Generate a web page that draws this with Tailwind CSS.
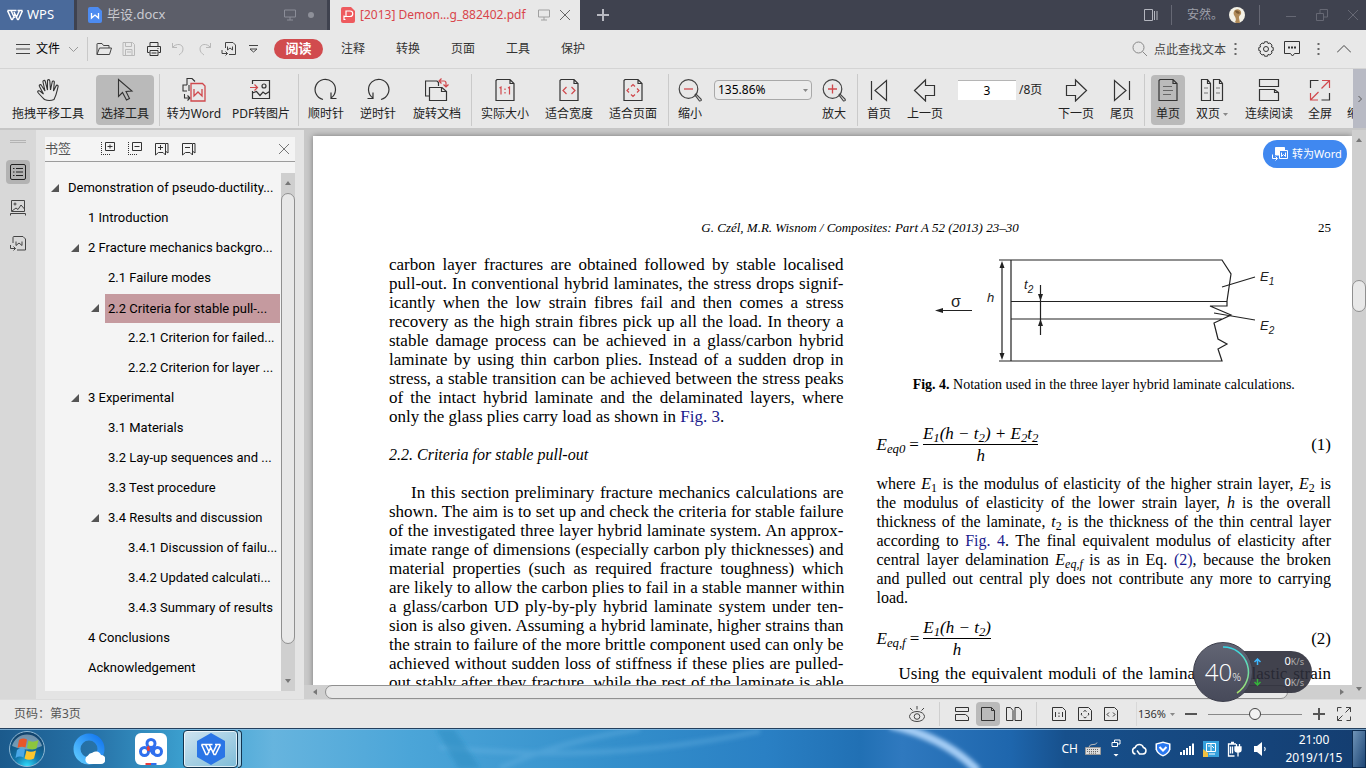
<!DOCTYPE html>
<html lang="zh-CN">
<head>
    <meta charset="UTF-8" />
    <meta name="viewport" content="width=device-width, initial-scale=1" />
    <title>[2013] Demon...g_882402.pdf - WPS</title>
    <script src="https://cdn.jsdelivr.net/npm/@tailwindcss/browser@4"></script>
</head>
<body class="flex h-screen flex-col overflow-hidden bg-[#e8e8e8] font-['Noto_Sans','Noto_Sans_CJK_SC',sans-serif] text-xs text-[#222]">

    <!-- Title bar -->
    <header class="flex h-[30px] shrink-0 items-stretch bg-[#3f424f]">
        <button class="flex w-[74px] items-center gap-1 bg-[#4a6a9b] pl-[7px] text-[13px] text-white">
            <svg class="h-3 w-4" viewBox="0 0 16 12" fill="none" stroke="#fff" stroke-width="1.500" stroke-linejoin="round"><path d="M.5 1.500h9M.5 1.500L4.500 10.500h1L8 5M4 1.500L7.500 9M15.500 1.500h-5M15.500 1.500L11.500 10.500h-1L7 3M12.500 1.500L9 9" /></svg>
            WPS
        </button>
        <div class="ml-[3px] flex w-[250px] items-center bg-[#5c5e69] pr-[13px] pl-[11px]">
            <svg class="h-4 w-[14px]" viewBox="0 0 14 16"><path d="M2 0h8l4 4v10a2 2 0 0 1-2 2H2a2 2 0 0 1-2-2V2a2 2 0 0 1 2-2z" fill="#4d8bf0" /><path d="M3.500 6v5l3.500-3 3.500 3V6" fill="none" stroke="#fff" stroke-width="1.300" /></svg>
            <a href="#" class="ml-[5px] flex-1 text-[13px] text-[#c9cad0]">毕设.docx</a>
            <svg class="h-3 w-3" viewBox="0 0 12 12" fill="none" stroke="#8b8d98"><path d="M.5 1h11v7H.5zM6 8v3M3 11h6" /></svg>
            <span class="ml-3 h-1.5 w-1.5 rounded-full bg-[#8e9099]"></span>
        </div>
        <div class="ml-[3px] flex w-[250px] items-center bg-[#e8e8e8] pr-2.5 pl-[11px]">
            <svg class="h-4 w-[14px] shrink-0" viewBox="0 0 14 16"><path d="M2 0h8l4 4v10a2 2 0 0 1-2 2H2a2 2 0 0 1-2-2V2a2 2 0 0 1 2-2z" fill="#ee5a5e" /><path d="M5 9.500V4h4a2 2 0 0 1 0 5.500H3.500M3 8.500v4h1.500" fill="none" stroke="#fff" stroke-width="1.200" /></svg>
            <a href="#" class="ml-[5px] flex-1 whitespace-nowrap text-xs text-[#d9454b]">[2013] Demon...g_882402.pdf</a>
            <svg class="h-3 w-3 shrink-0" viewBox="0 0 12 12" fill="none" stroke="#a0a0a0"><path d="M.5 1h11v7H.5zM6 8v3M3 11h6" /></svg>
            <button class="ml-2.5" aria-label="关闭标签"><svg class="h-2.5 w-2.5" viewBox="0 0 10 10" stroke="#666"><path d="M0 0l10 10M10 0L0 10" /></svg></button>
        </div>
        <button class="ml-[17px]" aria-label="新建标签"><svg class="h-3 w-3" viewBox="0 0 12 12" stroke="#b9bac2" stroke-width="2"><path d="M0 6h12M6 0v12" /></svg></button>
        <div class="ml-auto flex items-center pr-2">
            <svg class="h-3.5 w-3.5" viewBox="0 0 14 14" fill="none" stroke="#b4b6bf"><path d="M.5 1.500h8v11h-8zM10.500 3v9M13 3v9" /></svg>
            <span class="mx-[13px] h-5 w-px bg-[#666874]"></span>
            <a href="#" class="ml-[2px] text-[#9d9fa9]">安然。</a>
            <svg class="ml-1.5 h-4 w-4" viewBox="0 0 16 16"><circle cx="8" cy="8" r="8" fill="#f4f1e6" /><path d="M6 3c3-2 7 0 6 4-1 2-2 1-2 4l1 5c-3 1-4 0-5-1 2-3 0-5-1-7s0-4 1-5z" fill="#b08a58" /><path d="M6 4c2-1 4 0 5 2-2 2-4 0-5-2z" fill="#7a5a33" /></svg>
            <span class="mx-[14px] h-5 w-px bg-[#666874]"></span>
            <button class="ml-3" aria-label="最小化"><svg class="h-2.5 w-2.5" viewBox="0 0 10 10" stroke="#666874"><path d="M0 6.500h10" /></svg></button>
            <button class="ml-5" aria-label="还原"><svg class="h-3 w-3" viewBox="0 0 12 12" fill="none" stroke="#666874"><path d="M.5 4.500h7v7h-7zM4 4.500v-4h7.500V8H8" /></svg></button>
            <button class="ml-5" aria-label="关闭"><svg class="h-2.5 w-2.5" viewBox="0 0 10 10" stroke="#666874"><path d="M0 0l10 10M10 0L0 10" /></svg></button>
        </div>
    </header>

    <!-- Menu row -->
    <nav class="flex h-[38px] shrink-0 items-center pr-[15px] pl-4 text-[#333]">
        <button class="flex items-center gap-1.5 text-black">
            <svg class="h-2.5 w-3.5" viewBox="0 0 14 10" stroke="#444"><path d="M0 .5h14M0 5h14M0 9.500h14" /></svg>
            文件
            <svg class="ml-[3px] h-[5px] w-[9px]" viewBox="0 0 9 5" fill="none" stroke="#999"><path d="M0 0l4.500 4.500L9 0" /></svg>
        </button>
        <span class="mr-2 ml-[9px] h-6 w-px bg-[#c9c9c9]"></span>
        <button aria-label="打开"><svg class="h-4 w-4" viewBox="0 0 16 16" fill="none" stroke="#444"><path d="M1 13.500V3q0-.5.5-.5H6l1.500 2h5.500v2.500M1 13.500L3.500 7H15.500L13.500 13.500z" /></svg></button>
        <button class="ml-[9px]" aria-label="保存"><svg class="h-4 w-4" viewBox="0 0 16 16" fill="none" stroke="#b8b8b8"><path d="M2 1.500h9.500l2 2v11H2zM4.500 1.500v4h6v-4M4.500 14.500v-6h6.500v6M6 11h4" /></svg></button>
        <button class="ml-[9px]" aria-label="打印"><svg class="h-4 w-4" viewBox="0 0 16 16" fill="none" stroke="#333"><path d="M4 5V1.500h8V5M3.500 11.500h-2v-6h13v6h-2M4 9.500h8v5H4zM5.500 12h5M11.500 7.500h1" /></svg></button>
        <button class="ml-[9px]" aria-label="撤销"><svg class="h-4 w-4" viewBox="0 0 16 16" fill="none" stroke="#b8b8b8"><path d="M1.500 2v4.500H6M1.500 6.500C5 2 12 2.500 12 8c0 3-2 4.500-4 6" /></svg></button>
        <button class="ml-[9px]" aria-label="重做"><svg class="h-4 w-4" viewBox="0 0 16 16" fill="none" stroke="#b8b8b8"><path d="M14.500 2v4.500H10M14.500 6.500C11 2 4 2.500 4 8c0 3 2 4.500 4 6" /></svg></button>
        <button class="ml-[9px]" aria-label="转为Word"><svg class="h-4 w-4" viewBox="0 0 16 16" fill="none" stroke="#444"><path d="M4.500 7V1.500h7.500l2.500 2.500v9.500H8M6.500 5.500V9l2.500-2 2.500 2V5.500M1 9v3.500h5.500M4.500 10.500l2 2-2 2" /></svg></button>
        <button class="ml-3" aria-label="自定义快速访问"><svg class="h-2 w-[9px]" viewBox="0 0 9 8" fill="none" stroke="#444"><path d="M0 .5h9M1 4h7L4.500 7z" /></svg></button>
        <button class="ml-4 h-5 w-[49px] rounded-full bg-[#d14b4e] text-[13px] font-bold text-white">阅读</button>
        <button class="ml-[18px]">注释</button>
        <button class="ml-[31px]">转换</button>
        <button class="ml-[31px]">页面</button>
        <button class="ml-[31px]">工具</button>
        <button class="ml-[31px]">保护</button>
        <div class="ml-auto flex items-center">
            <label for="find" class="mr-1.5"><svg class="h-4 w-4" viewBox="0 0 16 16" fill="none" stroke="#888"><title>查找</title><circle cx="6.500" cy="6.500" r="5.500" /><path d="M10.500 10.500l4.500 4.500" /></svg></label>
            <input id="find" type="text" placeholder="点此查找文本" class="w-[75px] bg-transparent pt-0.5 text-xs placeholder:text-[#444] outline-none" />
            <button class="ml-[5px]" aria-label="查找选项"><svg class="h-3.5 w-[3px]" viewBox="0 0 3 14" fill="#666"><path d="M.5 1h2v2h-2zM.5 6h2v2h-2zM.5 11h2v2h-2z" /></svg></button>
            <button class="ml-[21px]" aria-label="设置"><svg class="h-4 w-4" viewBox="0 0 16 16" fill="none" stroke="#333"><path d="M6.500 .8h3l.6 1.800 1.800-.6 2.100 2.100-.6 1.800 1.800.6v3l-1.800.6.6 1.800-2.100 2.100-1.800-.6-.6 1.800h-3l-.6-1.800-1.800.6L2 11.900l.6-1.800-1.800-.6v-3l1.800-.6L2 4.100 4.100 2l1.800.6z" /><circle cx="8" cy="8" r="2.500" /></svg></button>
            <button class="ml-2.5" aria-label="反馈"><svg class="h-4 w-4" viewBox="0 0 16 16" fill="none" stroke="#333"><path d="M.5.500h15v12h-5l-2 2.500-2-2.500h-6z" /><path d="M4 6.500h2M7 6.500h2M10 6.500h2" stroke-width="2" /></svg></button>
            <button class="ml-[17px]" aria-label="更多"><svg class="h-3.5 w-[3px]" viewBox="0 0 3 14" fill="#666"><path d="M.5 1h2v2h-2zM.5 6h2v2h-2zM.5 11h2v2h-2z" /></svg></button>
            <button class="ml-[17px]" aria-label="折叠功能区"><svg class="h-2 w-3.5" viewBox="0 0 14 8" fill="none" stroke="#444"><path d="M0 7.500L7 .5l7 7" /></svg></button>
        </div>
    </nav>

    <!-- Ribbon -->
    <div class="flex h-[62px] shrink-0 items-center border-t border-b-2 border-t-[#d4d4d4] border-b-[#c6c6c6]">
        <div class="mt-[3px] flex h-[52px] min-w-0 flex-1 items-center overflow-hidden whitespace-nowrap">
            <button class="flex h-[50px] w-24 shrink-0 flex-col items-center gap-1 pt-[3px]">
                <svg class="h-6 w-6 shrink-0" viewBox="0 0 24 24" fill="none" stroke="#333" stroke-width="1.100"><path d="M8.500 21.500C6 19 3.500 16.500 2 14.500c-1-1.500 1-2.500 2.500-1l3 2.500L3.500 8.500c-.8-1.800 1.200-2.600 2-1L9 13 7 4c-.3-1.800 1.800-2.200 2.300-.5L11.500 12V3c0-1.800 2.200-1.800 2.300 0L14.500 12l1.700-8c.4-1.600 2.400-1.200 2.100.5L17.500 13l2.500-5c.8-1.500 2.500-.7 2 .9C21 13 20.500 17 18 21.500q-4.500 2-9.500 0z" /></svg>
                <span>拖拽平移工具</span>
            </button>
            <button class="flex h-[50px] w-[58px] shrink-0 flex-col items-center gap-1 rounded bg-[#bababa] pt-[3px]">
                <svg class="h-6 w-6 shrink-0" viewBox="0 0 24 24" fill="none" stroke="#333" stroke-width="1.100"><path d="M5.500 1.500v17l4-4 4 7.500 3-1.500-3.500-7 6-.5z" /></svg>
                <span>选择工具</span>
            </button>
            <span class="ml-[5px] h-[52px] w-px shrink-0 bg-[#cacaca]"></span>
            <button class="flex h-[50px] w-[68px] shrink-0 flex-col items-center gap-1 pt-[3px]">
                <svg class="h-6 w-6 shrink-0" viewBox="0 0 24 24" fill="none" stroke="#333" stroke-width="1.100"><path d="M5 7V.5h5l3 3M5 7H1v6h4M7 7v6M2.500 16v4H8M5.500 17.500L8 20l-2.500 2.500" /><path d="M9 5.500h11.500L23 8v15H9zM12 11v7l4-4 4 4v-7" stroke="#d0484c" stroke-width="1.300" /></svg>
                <span>转为Word</span>
            </button>
            <button class="mr-1 flex h-[50px] w-[66px] shrink-0 flex-col items-center gap-1 pt-[3px]">
                <svg class="h-6 w-6 shrink-0" viewBox="0 0 24 24" fill="none" stroke="#333" stroke-width="1.200"><path d="M3.500 6V2.500h17v18h-17V13M3.500 15l4-1.500 3.500 4 3-3.500 2.500 2 4-2.500" /><circle cx="15" cy="8" r="2" /><path d="M1 9.500h7M5.500 6.500l3 3-3 3" stroke="#d0484c" /></svg>
                <span>PDF转图片</span>
            </button>
            <span class="h-[52px] w-px shrink-0 bg-[#cacaca]"></span>
            <button class="flex h-[50px] w-[54px] shrink-0 flex-col items-center gap-1 pt-[3px]">
                <svg class="h-6 w-6 shrink-0" viewBox="0 0 24 24" fill="none" stroke="#333" stroke-width="1.200"><path d="M9 21.500A10.200 10.200 0 1 1 17 20M17 14.500v6h5.500" /></svg>
                <span>顺时针</span>
            </button>
            <button class="flex h-[50px] w-[50px] shrink-0 flex-col items-center gap-1 pt-[3px]">
                <svg class="h-6 w-6 shrink-0" viewBox="0 0 24 24" fill="none" stroke="#333" stroke-width="1.200"><path d="M15 21.500A10.200 10.200 0 1 0 7 20M7 14.500v6H1.500" /></svg>
                <span>逆时针</span>
            </button>
            <button class="flex h-[50px] w-[68px] shrink-0 flex-col items-center gap-1 pt-[3px]">
                <svg class="h-6 w-6 shrink-0" viewBox="0 0 24 24" fill="none" stroke="#333" stroke-width="1.200"><path d="M4.500 18H.5V3H12l1.500 1.500V8M4.500 9.500H17l4.500 4v9h-17zM16.500 9.500v4h5" /><path d="M14 3h5q2 0 2 2v4M16.500.5L14 3l2.500 2.500M18.500 6.500L21 9l2.500-2.500" stroke="#d0484c" /></svg>
                <span>旋转文档</span>
            </button>
            <span class="h-[52px] w-px shrink-0 bg-[#cacaca]"></span>
            <button class="ml-px flex h-[50px] w-16 shrink-0 flex-col items-center gap-1 pt-[3px]">
                <svg class="h-6 w-6 shrink-0" viewBox="0 0 24 24" fill="none" stroke="#333" stroke-width="1.200"><path d="M4 1.500h13l4 4V22.500H3V2.500zM17 1.500v4h4" /><path d="M6.500 10L8 9v7.500M15 10l1.500-1v7.500M12 10.500v1.500M12 14v1.500" stroke="#d0484c" /></svg>
                <span>实际大小</span>
            </button>
            <button class="flex h-[50px] w-16 shrink-0 flex-col items-center gap-1 pt-[3px]">
                <svg class="h-6 w-6 shrink-0" viewBox="0 0 24 24" fill="none" stroke="#333" stroke-width="1.200"><path d="M4 1.500h13l4 4V22.500H3V2.500zM17 1.500v4h4" /><path d="M9.500 9L6 12.500 9.500 16M14.500 9l3.500 3.500L14.500 16" stroke="#d0484c" /></svg>
                <span>适合宽度</span>
            </button>
            <button class="flex h-[50px] w-16 shrink-0 flex-col items-center gap-1 pt-[3px]">
                <svg class="h-6 w-6 shrink-0" viewBox="0 0 24 24" fill="none" stroke="#333" stroke-width="1.200"><path d="M4 1.500h13l4 4V22.500H3V2.500zM17 1.500v4h4" /><path d="M8 10.500L6 12.500l2 2M16 10.500l2 2-2 2M10 8.500l2-2 2 2M10 16.500l2 2 2-2" stroke="#d0484c" /></svg>
                <span>适合页面</span>
            </button>
            <span class="ml-[3px] h-[52px] w-px shrink-0 bg-[#cacaca]"></span>
            <button class="flex h-[50px] w-[42px] shrink-0 flex-col items-center gap-1 pt-[3px]">
                <svg class="h-6 w-6 shrink-0" viewBox="0 0 24 24" fill="none" stroke="#444" stroke-width="1.200"><circle cx="10.500" cy="11" r="9.300" /><path d="M17 17l1-1 5 5q1 2-1.500 2z" /><path d="M6 11h9" stroke="#d0484c" stroke-width="1.300" /></svg>
                <span>缩小</span>
            </button>
            <div class="relative mb-1 ml-[3px] shrink-0 self-start pt-[6px]">
                <select aria-label="缩放比例" class="h-5 w-[98px] appearance-none rounded-sm border border-[#a9a9a9] bg-[#ececec] pl-[3px] text-xs text-black">
                    <option>135.86%</option>
                </select>
                <svg class="pointer-events-none absolute top-[15px] right-1 h-[3px] w-[5px]" viewBox="0 0 5 3"><path d="M0 0h5L2.500 3z" fill="#888" /></svg>
            </div>
            <button class="flex h-[50px] w-[44px] shrink-0 flex-col items-center gap-1 pt-[3px]">
                <svg class="h-6 w-6 shrink-0" viewBox="0 0 24 24" fill="none" stroke="#444" stroke-width="1.200"><circle cx="10.500" cy="11" r="9.300" /><path d="M17 17l1-1 5 5q1 2-1.500 2z" /><path d="M6 11h9M10.500 6.500v9" stroke="#d0484c" stroke-width="1.300" /></svg>
                <span>放大</span>
            </button>
            <span class="ml-px h-[52px] w-px shrink-0 bg-[#cacaca]"></span>
            <button class="flex h-[50px] w-[42px] shrink-0 flex-col items-center gap-1 pt-[3px]">
                <svg class="h-6 w-6 shrink-0" viewBox="0 0 24 24" fill="none" stroke="#333" stroke-width="1.200"><path d="M4.500 3v19M19.500 2.500v20L8 12.500z" /></svg>
                <span>首页</span>
            </button>
            <button class="flex h-[50px] w-[50px] shrink-0 flex-col items-center gap-1 pt-[3px]">
                <svg class="h-6 w-6 shrink-0" viewBox="0 0 24 24" fill="none" stroke="#333" stroke-width="1.200"><path d="M1.500 12.500l11-10.500v5.500h9v10h-9V23z" /></svg>
                <span>上一页</span>
            </button>
            <div class="flex w-[102px] shrink-0 items-center gap-[3px] self-start pt-[6px] pl-2">
                <input type="text" value="3" aria-label="页码" class="h-5 w-[58px] border-t border-[#b5b5b5] bg-white text-center text-xs text-black" />
                <span>/8页</span>
            </div>
            <button class="flex h-[50px] w-12 shrink-0 flex-col items-center gap-1 pt-[3px]">
                <svg class="h-6 w-6 shrink-0" viewBox="0 0 24 24" fill="none" stroke="#333" stroke-width="1.200"><path d="M22.500 12.500L11.500 2v5.500h-9v10h9V23z" /></svg>
                <span>下一页</span>
            </button>
            <button class="flex h-[50px] w-[44px] shrink-0 flex-col items-center gap-1 pt-[3px]">
                <svg class="h-6 w-6 shrink-0" viewBox="0 0 24 24" fill="none" stroke="#333" stroke-width="1.200"><path d="M19.500 3v19M4.500 2.500v20L16 12.500z" /></svg>
                <span>尾页</span>
            </button>
            <span class="h-[52px] w-px shrink-0 bg-[#cacaca]"></span>
            <button class="ml-1.5 flex h-[50px] w-[34px] shrink-0 flex-col items-center gap-1 rounded bg-[#bababa] pt-[3px]">
                <svg class="h-6 w-6 shrink-0" viewBox="0 0 24 24" fill="none" stroke="#333" stroke-width="1.200"><path d="M4 1.500h13l4 4V22.500H3V2.500zM17 1.500v4h4" /><path d="M7 8.500h9M7 12.500h10M7 16.500h8" stroke="#666" /></svg>
                <span>单页</span>
            </button>
            <button class="flex h-[50px] w-[54px] shrink-0 flex-col items-center gap-1 pt-[3px]">
                <svg class="h-6 w-6 shrink-0" viewBox="0 0 24 24" fill="none" stroke="#333" stroke-width="1.200"><path d="M1.500 1.500h6l3 4v17h-9zM7.500 1.500v4h3M13.500 1.500h6l3 4v17h-9zM19.500 1.500v4h3" /><path d="M4 10h4M4 15h4M16 10h4M16 15h4" stroke="#777" /></svg>
                <span class="flex items-center gap-[3px]">双页<svg class="h-[3px] w-[5px]" viewBox="0 0 5 3"><path d="M0 0h5L2.500 3z" fill="#888" /></svg></span>
            </button>
            <button class="flex h-[50px] w-[60px] shrink-0 flex-col items-center gap-1 pt-[3px]">
                <svg class="h-6 w-6 shrink-0" viewBox="0 0 24 24" fill="none" stroke="#333" stroke-width="1.200"><path d="M2.500 1.500h19v7h-19zM2.500 22.500v-11h15l4 3v8zM17.500 11.500v3h4" /></svg>
                <span>连续阅读</span>
            </button>
            <button class="flex h-[50px] w-[42px] shrink-0 flex-col items-center gap-1 pt-[3px]">
                <svg class="h-6 w-6 shrink-0" viewBox="0 0 24 24" fill="none" stroke="#333" stroke-width="1.200"><path d="M2.500 10V2.500h8M21.500 15v7h-8" /><path d="M14 2.500h7.500V10M13.500 10.500l8-8M2.500 15v7h7.500M2.500 22l8-8" stroke="#d0484c" /></svg>
                <span>全屏</span>
            </button>
            <button class="flex h-[50px] w-12 shrink-0 flex-col items-center gap-1 pt-[3px]">
                <span class="h-6"></span>
                <span>缩略图</span>
            </button>
        </div>
        <button class="flex h-full w-[13px] shrink-0 items-center justify-center bg-[#b8bac4]" aria-label="向右滚动"><svg class="h-1.5 w-1" viewBox="0 0 4 6" fill="none" stroke="#555"><path d="M.5 0l3 3-3 3" /></svg></button>
    </div>

    <!-- Work area -->
    <main class="flex min-h-0 flex-1">
        <aside class="flex w-9 shrink-0 flex-col items-center bg-[#d8d8d8] pt-2.5">
            <span class="h-[3px] w-4 border-y border-[#b4b4b4]"></span>
            <button class="mt-[17px] flex h-6 w-6 items-center justify-center rounded bg-[#b3b3b3]" aria-label="书签"><svg class="h-4 w-4" viewBox="0 0 16 16" fill="none" stroke="#222"><rect x=".5" y=".5" width="15" height="15" rx="1.500" /><path d="M3 4.500h1.500M3 8h1.500M3 11.500h1.500M6 4.500h7M6 8h7M6 11.500h7" /></svg></button>
            <button class="mt-4" aria-label="缩略图"><svg class="h-4 w-4" viewBox="0 0 16 16" fill="none" stroke="#444"><path d="M1.500.5h13v11h-13zM.5 15.500v-2h15v2M2 11l4-3 2 1.500L11 5l3.500 4" /><circle cx="5" cy="4" r="1" /></svg></button>
            <button class="mt-5" aria-label="转为Word"><svg class="h-4 w-4" viewBox="0 0 16 16" fill="none" stroke="#444"><path d="M3 7V1.500Q3 .5 4 .5h9l2.500 2.500v11H7M6 5.500v4l3-2.500 3 2.500v-4M.5 9v3.500h5M3.500 10.500l2 2-2 2" /></svg></button>
        </aside>

        <section class="flex w-[268px] shrink-0 flex-col border-r-2 border-[#e4e4e4] bg-[#e4e4e4] pt-[7px] pr-[7px] pb-2 pl-[9px]">
            <div class="flex h-[25px] shrink-0 items-center border-b border-[#9c9c9c] bg-[#f4f4f4] pr-1.5">
                <h2 class="text-[13px] text-[#555]">书签</h2>
                <button class="ml-[30px]" aria-label="展开"><svg class="h-3.5 w-3.5" viewBox="0 0 14 14" fill="none" stroke="#333"><path d="M4.500.5h9v8h-9zM6.500 4.500h5M9 2.500v4" /><path d="M.5 0v14M0 12.500h10" stroke-dasharray="1 1" /></svg></button>
                <button class="ml-[13px]" aria-label="折叠"><svg class="h-3.5 w-3.5" viewBox="0 0 14 14" fill="none" stroke="#333"><path d="M4.500.5h9v8h-9zM6.500 4.500h5" /><path d="M.5 0v14M0 12.500h10" stroke-dasharray="1 1" /></svg></button>
                <button class="ml-[13px]" aria-label="添加书签"><svg class="h-3.5 w-3.5" viewBox="0 0 14 14" fill="none" stroke="#333"><path d="M.5 1.500h10v11.500L8 10.500H3.500L.5 13zM3 5.500h5M5.500 3v5M11 1.500l2 0V11l-2-1.500" /></svg></button>
                <button class="ml-[13px]" aria-label="删除书签"><svg class="h-3.5 w-3.5" viewBox="0 0 14 14" fill="none" stroke="#333"><path d="M.5 1.500h10v11.500L8 10.500H3.500L.5 13zM3 5.500h5M11 1.500l2 0V11l-2-1.500" /></svg></button>
                <button class="ml-auto" aria-label="关闭书签"><svg class="h-2.5 w-2.5" viewBox="0 0 10 10" stroke="#777"><path d="M0 0l10 10M10 0L0 10" /></svg></button>
            </div>
            <div class="flex min-h-0 flex-1 bg-[#f4f4f4] pt-[11px]">
                <ul class="min-w-0 flex-1 overflow-hidden font-['Roboto','Open_Sans',sans-serif] text-[13px] whitespace-nowrap text-black">
                    <li class="flex h-[30px] items-center gap-1.5 pl-1.5"><svg class="h-2 w-2 shrink-0" viewBox="0 0 8 8"><path d="M8 0v8H0z" fill="#555" /></svg><a href="#" class="min-w-0 flex-1 px-[3px]">Demonstration of pseudo-ductility...</a></li>
                    <li class="flex h-[30px] items-center pl-10"><a href="#" class="flex-1 px-[3px]">1 Introduction</a></li>
                    <li class="flex h-[30px] items-center gap-1.5 pl-[26px]"><svg class="h-2 w-2 shrink-0" viewBox="0 0 8 8"><path d="M8 0v8H0z" fill="#555" /></svg><a href="#" class="flex-1 px-[3px]">2 Fracture mechanics backgro...</a></li>
                    <li class="flex h-[30px] items-center pl-[60px]"><a href="#" class="flex-1 px-[3px]">2.1 Failure modes</a></li>
                    <li class="flex h-[30px] items-center gap-1.5 pr-px pl-[46px]"><svg class="h-2 w-2 shrink-0" viewBox="0 0 8 8"><path d="M8 0v8H0z" fill="#555" /></svg><a href="#" class="flex-1 bg-[#c59a9f] px-[3px] leading-[29px]">2.2 Criteria for stable pull-...</a></li>
                    <li class="flex h-[30px] items-center pl-20"><a href="#" class="flex-1 px-[3px]">2.2.1 Criterion for failed...</a></li>
                    <li class="flex h-[30px] items-center pl-20"><a href="#" class="flex-1 px-[3px]">2.2.2 Criterion for layer ...</a></li>
                    <li class="flex h-[30px] items-center gap-1.5 pl-[26px]"><svg class="h-2 w-2 shrink-0" viewBox="0 0 8 8"><path d="M8 0v8H0z" fill="#555" /></svg><a href="#" class="flex-1 px-[3px]">3 Experimental</a></li>
                    <li class="flex h-[30px] items-center pl-[60px]"><a href="#" class="flex-1 px-[3px]">3.1 Materials</a></li>
                    <li class="flex h-[30px] items-center pl-[60px]"><a href="#" class="flex-1 px-[3px]">3.2 Lay-up sequences and ...</a></li>
                    <li class="flex h-[30px] items-center pl-[60px]"><a href="#" class="flex-1 px-[3px]">3.3 Test procedure</a></li>
                    <li class="flex h-[30px] items-center gap-1.5 pl-[46px]"><svg class="h-2 w-2 shrink-0" viewBox="0 0 8 8"><path d="M8 0v8H0z" fill="#555" /></svg><a href="#" class="flex-1 px-[3px]">3.4 Results and discussion</a></li>
                    <li class="flex h-[30px] items-center pl-20"><a href="#" class="flex-1 px-[3px]">3.4.1 Discussion of failu...</a></li>
                    <li class="flex h-[30px] items-center pl-20"><a href="#" class="flex-1 px-[3px]">3.4.2 Updated calculati...</a></li>
                    <li class="flex h-[30px] items-center pl-20"><a href="#" class="flex-1 px-[3px]">3.4.3 Summary of results</a></li>
                    <li class="flex h-[30px] items-center pl-10"><a href="#" class="flex-1 px-[3px]">4 Conclusions</a></li>
                    <li class="flex h-[30px] items-center pl-10"><a href="#" class="flex-1 px-[3px]">Acknowledgement</a></li>
                </ul>
                <div class="flex w-3.5 shrink-0 flex-col items-center bg-[#cfcfcf]">
                    <svg class="my-2 h-1 w-1.5 shrink-0" viewBox="0 0 6 4"><path d="M0 4h6L3 0z" fill="#777" /></svg>
                    <span class="w-3.5 flex-1 rounded-full border border-[#909090] bg-[#e8e8e8]"></span>
                    <svg class="mt-[35px] mb-2 h-1 w-1.5 shrink-0" viewBox="0 0 6 4"><path d="M0 0h6L3 4z" fill="#777" /></svg>
                </div>
            </div>
        </section>

        <section class="relative flex min-w-0 flex-1 bg-[#c8c8c8]">
            <div class="flex min-w-0 flex-1 flex-col">
                <div class="min-h-0 flex-1 overflow-hidden pt-1.5 pl-[9px]">
                    <article class="min-h-full bg-white pt-[84px] pr-[21px] pl-[76px] font-['Liberation_Serif',serif] text-[17px] leading-[19px] whitespace-nowrap text-black shadow-[0_0_6px_rgba(0,0,0,0.4)]">
                        <div class="grid h-4 grid-cols-[1fr_auto_1fr] items-center text-[13px] leading-4">
                            <span></span>
                            <span class="italic">G. Czél, M.R. Wisnom / Composites: Part A 52 (2013) 23–30</span>
                            <span class="text-right">25</span>
                        </div>
                        <div class="mt-[19px] grid grid-cols-2 gap-[33px]">
                            <div>
                                <p class="[text-align-last:justify]">carbon layer fractures are obtained followed by stable localised<br>pull-out. In conventional hybrid laminates, the stress drops signif-<br>icantly when the low strain fibres fail and then comes a stress<br>recovery as the high strain fibres pick up all the load. In theory a<br>stable damage process can be achieved in a glass/carbon hybrid<br>laminate by using thin carbon plies. Instead of a sudden drop in<br>stress, a stable transition can be achieved between the stress peaks<br>of the intact hybrid laminate and the delaminated layers, where</p>
                                <p>only the glass plies carry load as shown in <a href="#" class="text-[#1a1a8c]">Fig. 3</a>.</p>
                                <h3 class="my-[19px] text-base leading-[19px] italic">2.2. Criteria for stable pull-out</h3>
                                <p class="indent-[22px] [text-align-last:justify]">In this section preliminary fracture mechanics calculations are<br>shown. The aim is to set up and check the criteria for stable failure<br>of the investigated three layer hybrid laminate system. An approx-<br>imate range of dimensions (especially carbon ply thicknesses) and<br>material properties (such as required fracture toughness) which<br>are likely to allow the carbon plies to fail in a stable manner within<br>a glass/carbon UD ply-by-ply hybrid laminate system under ten-<br>sion is also given. Assuming a hybrid laminate, higher strains than<br>the strain to failure of the more brittle component used can only be<br>achieved without sudden loss of stiffness if these plies are pulled-<br>out stably after they fracture, while the rest of the laminate is able</p>
                            </div>
                            <div>
                                <svg class="h-[110px] w-[454px]" viewBox="0 -1 454 110" fill="none" stroke="#222" stroke-width="1.200">
                                    <path d="M134 4V105M134 4H345L354 18 350 45V50H333L354 59 337 67 341 83 350 88 341 93 345 105H134M134 45.500H350M134 63H345" />
                                    <path d="M122 4h12M122 105h12M125 8v93M163.500 29v50M345 31l33-10M337 57l41 7M64 54.500h31" />
                                    <path d="M125 5l2.500 7h-5zM125 104l2.500-7h-5zM163.500 45l2.500-7h-5zM163.500 63l2.500 7h-5zM58 54.500l8-2.500v5z" fill="#222" stroke="none" />
                                    <g class="font-['Liberation_Sans',sans-serif] text-[13px] italic" fill="#222" stroke="none">
                                        <text x="74" y="51" class="text-base not-italic">σ</text>
                                        <text x="110" y="46">h</text>
                                        <text x="147" y="33">t<tspan dy="4" class="text-[10px]">2</tspan></text>
                                        <text x="383" y="25">E<tspan dy="4" class="text-[10px]">1</tspan></text>
                                        <text x="383" y="74">E<tspan dy="4" class="text-[10px]">2</tspan></text>
                                    </g>
                                </svg>
                                <p class="mt-[11px] text-center text-sm leading-[18px]"><b>Fig. 4.</b> Notation used in the three layer hybrid laminate calculations.</p>
                                <div class="mt-[29px] flex h-[43px] items-center">
                                    <i>E<sub>eq0</sub></i>
                                    <span class="mx-1">=</span>
                                    <span class="flex flex-col text-center leading-[21px] italic"><span class="border-b border-black">E<sub>1</sub>(h − t<sub>2</sub>) + E<sub>2</sub>t<sub>2</sub></span><span>h</span></span>
                                    <span class="ml-auto">(1)</span>
                                </div>
                                <p class="mt-2 text-base leading-[19px] [text-align-last:justify]">where <i>E</i><sub>1</sub> is the modulus of elasticity of the higher strain layer, <i>E</i><sub>2</sub> is<br>the modulus of elasticity of the lower strain layer, <i>h</i> is the overall<br>thickness of the laminate, <i>t</i><sub>2</sub> is the thickness of the thin central layer<br>according to <a href="#" class="text-[#1a1a8c]">Fig. 4</a>. The final equivalent modulus of elasticity after<br>central layer delamination <i>E<sub>eq,f</sub></i> is as in Eq. <a href="#" class="text-[#1a1a8c]">(2)</a>, because the broken<br>and pulled out central ply does not contribute any more to carrying</p>
                                <p class="text-base leading-[19px]">load.</p>
                                <div class="mt-2.5 mb-1 flex h-[43px] items-center">
                                    <i>E<sub>eq,f</sub></i>
                                    <span class="mx-1">=</span>
                                    <span class="flex flex-col text-center leading-[21px] italic"><span class="border-b border-black">E<sub>1</sub>(h − t<sub>2</sub>)</span><span>h</span></span>
                                    <span class="ml-auto">(2)</span>
                                </div>
                                <p class="indent-[22px] [text-align-last:justify]">Using the equivalent moduli of the laminate, the elastic strain</p>
                            </div>
                        </div>
                    </article>
                </div>
                <div class="flex h-3.5 shrink-0 items-center bg-[#cfcfcf] pl-[9px]">
                    <svg class="mr-2 h-1.5 w-1 shrink-0" viewBox="0 0 4 6"><path d="M4 0v6L0 3z" fill="#777" /></svg>
                    <span class="h-3.5 flex-1 rounded-full border border-[#909090] bg-[#e8e8e8]"></span>
                    <svg class="mr-2 ml-[52px] h-1.5 w-1 shrink-0" viewBox="0 0 4 6"><path d="M0 0v6l4-3z" fill="#777" /></svg>
                </div>
            </div>
            <div class="flex w-3.5 shrink-0 flex-col items-center bg-[#cfcfcf]">
                <svg class="mt-2 h-1 w-1.5 shrink-0" viewBox="0 0 6 4"><path d="M0 4h6L3 0z" fill="#777" /></svg>
                <span class="mt-[138px] h-8 w-3.5 rounded-full border border-[#909090] bg-[#e8e8e8]"></span>
                <svg class="mt-auto mb-2 h-1 w-1.5 shrink-0" viewBox="0 0 6 4"><path d="M0 0h6L3 4z" fill="#777" /></svg>
            </div>

            <button class="absolute top-2.5 right-[19px] flex h-7 w-[84px] items-center gap-1 rounded-full bg-[#4088f0] pl-[9px] text-[11px] whitespace-nowrap text-white">
                <svg class="h-4 w-4 shrink-0" viewBox="0 0 16 16" fill="none" stroke="#fff"><path d="M3.500 1.500h9V4H7v5H3.500z" fill="#fff" /><path d="M7.500 4.500h8v8h-8zM9.500 6.500v4l2-2 2 2v-4M.5 8.500v4H5M3.500 10.500l2 2-2 2" /></svg>
                转为Word
            </button>

            <!-- Memory / network monitor floating above the page -->
            <div class="absolute right-[54px] -bottom-[3px] z-10 flex h-[60px] w-[119px] items-center">
                <div class="absolute right-0 left-7 flex h-[42px] flex-col justify-center gap-0.5 rounded-full bg-[#2c2e3a]/90 pr-2 pl-[33px] text-[11px] text-white">
                    <span class="flex items-center justify-between leading-[18px]"><svg class="h-[7px] w-[7px]" viewBox="0 0 7 7" fill="none" stroke="#3fb8ff" stroke-width="1.500"><path d="M3.500 7V1M.5 4l3-3 3 3" /></svg><span>0<small class="text-[9px] text-[#aaa]">K/s</small></span></span>
                    <span class="flex items-center justify-between leading-[18px]"><svg class="h-[7px] w-[7px]" viewBox="0 0 7 7" fill="none" stroke="#35b53a" stroke-width="1.500"><path d="M3.500 0v6M.5 3l3 3 3-3" /></svg><span>0<small class="text-[9px] text-[#aaa]">K/s</small></span></span>
                </div>
                <div class="relative flex h-[60px] w-[60px] items-center justify-center rounded-full border border-[#3b3d4a] bg-linear-to-b from-[#626574] to-[#474a5a] text-white">
                    <svg class="absolute h-[58px] w-[58px]" viewBox="0 0 58 58" fill="none" stroke-width="1.500"><defs><linearGradient id="ring" x1="0" y1="0" x2="0" y2="1"><stop stop-color="#35d6e6" /><stop offset="1" stop-color="#a6e36a" /></linearGradient></defs><path d="M29 4a25 25 0 0 1 14 46" stroke="url(#ring)" /></svg>
                    <span class="font-['Open_Sans',sans-serif] text-2xl font-light">40<small class="text-[11px]">%</small></span>
                </div>
            </div>
        </section>
    </main>

    <!-- Status bar -->
    <footer class="flex h-[29px] shrink-0 items-center border-t border-[#dcdcdc] pr-[15px] pl-3.5 text-[#555]">
        <span>页码：第3页</span>
        <button class="ml-auto" aria-label="护眼模式"><svg class="h-4 w-4" viewBox="0 0 16 16" fill="none" stroke="#444"><ellipse cx="8" cy="10.500" rx="7.500" ry="5" /><circle cx="8" cy="10.500" r="2.800" /><path d="M8 0v3.500M1 2l2.500 2.500M15 2l-2.500 2.500" /></svg></button>
        <span class="mr-3.5 ml-3.5 h-6 w-px bg-[#cfcfcf]"></span>
        <button aria-label="连续阅读"><svg class="h-4 w-4" viewBox="0 0 16 16" fill="none" stroke="#333"><path d="M1.500 1.500h13v4h-13zM1.500 14.500v-6h10l3 2.500v3.500z" /></svg></button>
        <button class="ml-1.5 flex h-6 w-6 items-center justify-center rounded bg-[#bababa]" aria-label="单页"><svg class="h-4 w-4" viewBox="0 0 16 16" fill="none" stroke="#333"><path d="M1.500 1.500h10l3 3v10h-13zM11.500 1.500v3h3" /></svg></button>
        <button class="ml-1.5" aria-label="双页"><svg class="h-4 w-4" viewBox="0 0 16 16" fill="none" stroke="#333"><path d="M.5 1.500h4l2.500 3v10H.5zM9 1.500h4l2.500 3v10H9z" /></svg></button>
        <span class="mr-3.5 ml-3.5 h-6 w-px bg-[#cfcfcf]"></span>
        <button aria-label="实际大小"><svg class="h-4 w-4" viewBox="0 0 16 16" fill="none" stroke="#333"><path d="M1.500 1.500h10l3 3v10h-13zM4.500 6v5M11.500 6v5M8 6.500v1.500M8 9.500v1.500" /></svg></button>
        <button class="ml-2.5" aria-label="适合页面"><svg class="h-4 w-4" viewBox="0 0 16 16" fill="none" stroke="#333"><path d="M1.500 1.500h10l3 3v10h-13zM5 7L4 8l1 1.500M11 7l1 1-1 1.500M6.500 5.500l1.500-1 1.500 1M6.500 11l1.500 1 1.500-1" /></svg></button>
        <button class="ml-2.5" aria-label="适合宽度"><svg class="h-4 w-4" viewBox="0 0 16 16" fill="none" stroke="#333"><path d="M1.500 1.500h10l3 3v10h-13zM6 6.500l-2 2 2 2M10 6.500l2 2-2 2" /></svg></button>
        <span class="mr-px ml-[17px] h-6 w-px bg-[#d8d8d8]"></span>
        <button class="flex items-center gap-1 text-[11px] text-[#333]">136% <svg class="h-[3px] w-[5px]" viewBox="0 0 5 3"><path d="M0 0h5L2.500 3z" fill="#888" /></svg></button>
        <button class="ml-2.5" aria-label="缩小"><svg class="h-3 w-3" viewBox="0 0 12 12" stroke="#555" stroke-width="2"><path d="M0 6h12" /></svg></button>
        <input type="range" min="0" max="100" value="50" aria-label="缩放" class="mx-[11px] h-3 w-[94px] appearance-none bg-transparent [&::-webkit-slider-runnable-track]:h-px [&::-webkit-slider-runnable-track]:bg-[#888] [&::-webkit-slider-thumb]:-mt-1.5 [&::-webkit-slider-thumb]:h-3 [&::-webkit-slider-thumb]:w-3 [&::-webkit-slider-thumb]:appearance-none [&::-webkit-slider-thumb]:rounded-full [&::-webkit-slider-thumb]:border [&::-webkit-slider-thumb]:border-[#444] [&::-webkit-slider-thumb]:bg-[#f2f2f2]" />
        <button aria-label="放大"><svg class="h-3 w-3" viewBox="0 0 12 12" stroke="#555" stroke-width="2"><path d="M0 6h12M6 0v12" /></svg></button>
        <button class="ml-3" aria-label="全屏"><svg class="h-3.5 w-3.5" viewBox="0 0 14 14" fill="none" stroke="#444"><path d="M.5 4.500v-4h4M9 .5h4.500V5M8.500 5.500l5-5M.5 9v4.500H5M.5 13.500l5-5M13.500 9.500v4h-4" /></svg></button>
    </footer>

    <!-- Taskbar -->
    <footer class="relative flex h-10 shrink-0 items-center border-t border-[#24405e] bg-[#2a80c4] text-white">
        <svg class="absolute inset-0 h-full w-full" viewBox="0 0 1366 39" preserveAspectRatio="none">
            <defs>
                <linearGradient id="sky"><stop stop-color="#1b5a8c" /><stop offset=".07" stop-color="#2773a8" /><stop offset=".14" stop-color="#3da3d2" /><stop offset=".2" stop-color="#66b4de" /><stop offset=".3" stop-color="#4ba5d8" /><stop offset=".45" stop-color="#348fcb" /><stop offset=".56" stop-color="#2a80c4" /><stop offset=".63" stop-color="#2170b4" /><stop offset=".66" stop-color="#2f79bf" /><stop offset=".74" stop-color="#1e66ad" /><stop offset=".78" stop-color="#17508c" /><stop offset="1" stop-color="#143d70" /></linearGradient>
                <filter id="soft"><feGaussianBlur stdDeviation="2" /></filter>
            </defs>
            <path d="M0 0h1366v39H0z" fill="url(#sky)" />
            <path d="M890 -4Q945 8 978 42" stroke="#a5cdf5" stroke-width="8" fill="none" filter="url(#soft)" />
            <path d="M500 39Q560 12 640 0M440 18Q600 36 760 2" stroke="#6fb8e6" stroke-opacity=".35" stroke-width="5" fill="none" filter="url(#soft)" />
            <path d="M436 0h18l26 39h-22z" fill="#2a8cc0" fill-opacity=".5" filter="url(#soft)" />
            <path d="M0 .5h1366" stroke="#9cc8e8" stroke-opacity=".7" />
        </svg>
        <div class="relative flex h-full w-full items-center">
            <button class="ml-[9px]" aria-label="开始">
                <svg class="h-9 w-9" viewBox="0 0 36 36"><defs><radialGradient id="orb" cx=".5" cy="1" r=".9"><stop stop-color="#2fe0ff" /><stop offset=".4" stop-color="#1378ac" /><stop offset="1" stop-color="#12456f" /></radialGradient></defs><circle cx="18" cy="18" r="17.500" fill="url(#orb)" stroke="#8fb8d4" /><path d="M3 15A15.500 15.500 0 0 1 33 15Q18 22 3 15z" fill="#fff" fill-opacity=".4" /><path d="M10 9q4-2.500 8-.5l-1.500 8q-4-1.500-8 .5z" fill="#e8562a" /><path d="M19.500 9.500q4 2.500 10-.5l-2 8.500q-5 2-9.500-.5z" fill="#8cc63e" /><path d="M8 19q4-2.500 8-.5l-1.500 8q-4-2-8 .5z" fill="#4aa8e8" /><path d="M17.500 19.500q4 2.500 9.500 0l-2 8q-5 2.500-9.500 0z" fill="#fcc62d" /></svg>
            </button>
            <button class="ml-[28px]" aria-label="QQ浏览器">
                <svg class="h-8 w-8" viewBox="0 0 32 32"><defs><linearGradient id="qq" x1="0" y1="1" x2="1" y2="0"><stop stop-color="#5cc8ff" /><stop offset="1" stop-color="#1478f0" /></linearGradient></defs><circle cx="16" cy="16" r="12" fill="none" stroke="url(#qq)" stroke-width="7" /><path d="M16 31a4.500 4.500 0 0 1-1-8.500 4 4 0 0 1 4-2.500 5.500 5.500 0 0 1 9 2 4.500 4.500 0 0 1 0 9z" fill="#fff" /></svg>
            </button>
            <button class="ml-[30px] flex h-8 w-8 items-center justify-center rounded-md bg-white" aria-label="百度网盘">
                <svg class="h-8 w-7" viewBox="0 0 28 32" fill="none" stroke-width="3"><circle cx="14" cy="10.500" r="4" stroke="#2f6fee" /><circle cx="7.500" cy="18.500" r="4" stroke="#2f6fee" /><circle cx="20.500" cy="18.500" r="4" stroke="#2f6fee" /><path d="M10.500 13.500q1.500 1.500 1 4.500" stroke="#e83c3c" /><path d="M16.500 14q-1.500 1.500-2.500 3.500 1 2.500 3 3.500" stroke="#2f6fee" /><path d="M8.500 31H14" stroke="#e83c3c" stroke-width="2" /><path d="M14 31h5.500" stroke="#2f6fee" stroke-width="2" /></svg>
            </button>
            <button class="ml-4 flex h-[38px] w-[55px] items-center justify-center rounded-sm border border-[#12344f] bg-linear-to-br from-[#cfe4f0] to-[#7dbcd8] shadow-[inset_0_0_0_1px_rgba(255,255,255,0.7)]" aria-label="WPS">
                <svg class="h-8 w-7" viewBox="0 0 28 32"><path d="M14 0l14 8v16l-14 8L0 24V8z" fill="#2a75e6" /><path d="M4.500 11.500h11M4.500 11.500L9 21.500h1.500L14 14M8.500 11.500L12.500 19.500M23.500 11.500h-5.500M23.500 11.500L18.500 21.500h-1.500L12.500 12M20 11.500L16 19.500" fill="none" stroke="#fff" stroke-width="1.500" /></svg>
            </button>
            <span class="h-[38px] w-1 rounded-r-sm border border-l-0 border-[#12344f] bg-[#a5d0e6]"></span>

            <div class="ml-auto flex items-center">
                <span class="mr-[7px] text-xs">CH</span>
                <svg class="h-4 w-4" viewBox="0 0 16 16" fill="none"><path d="M.5 6.500h15v7h-15z" fill="#ddd" stroke="#999" /><path d="M2 8.500h12M2 10.500h12M4 12.200h8" stroke="#666" stroke-dasharray="1 1" /><path d="M4 6q1-3 4-2.500t4-2" stroke="#bbb" /></svg>
                <svg class="mx-2.5 h-5 w-2.5" viewBox="0 0 10 20" fill="none" stroke="#fff"><path d="M1 3.500h5.500v4H1zM3.500 3V1H9v4H7" /><path d="M2.500 15h5L5 17.500z" fill="#fff" stroke="none" /></svg>
                <svg class="h-4 w-4" viewBox="0 0 16 16" fill="none" stroke="#fff" stroke-width="1.500"><path d="M4.500 13a3.300 3.300 0 0 1-.3-6.500 4.300 4.300 0 0 1 8.200 0A3.300 3.300 0 0 1 12 13H8.500L6 9.500" /></svg>
                <svg class="ml-2 h-4 w-4" viewBox="0 0 16 16"><path d="M8 .5l7.500 2v6Q14 13 8 15.500 2 13 .5 8.500v-6z" fill="#fff" /><path d="M8 2l6 1.500V8q-1 4-6 6-5-2-6-6V3.500z" fill="#2a78f0" /><path d="M4.500 6L8 9.500 11.500 6" fill="none" stroke="#fff" stroke-width="2" /></svg>
                <svg class="ml-2 h-4 w-4" viewBox="0 0 16 16" fill="#fff"><path d="M1 11h2v3H1zM4 9h2v5H4zM7 7h2v7H7zM10 5h2v9h-2zM13 2.500h2V14h-2z" /></svg>
                <svg class="ml-2 h-4 w-4" viewBox="0 0 16 16"><path d="M0 0h16v16H0z" fill="#35a0dc" /><path d="M0 8l5 4v4H0z" fill="#f0c040" /><path d="M3.500 2.500h9v8h-9zM8 3v7M5 5h2M9 5l2 2M6 13h6" fill="none" stroke="#fff" /></svg>
                <svg class="ml-2 h-4 w-4" viewBox="0 0 16 16" fill="none" stroke="#fff" stroke-width="1.300"><path d="M9 3H1.500v12h6M3.500 5.500v7M5.500 5.500v7M4 1.500h3" /><path d="M8 6h6v3q0 2-3 2t-3-2zM9.500 6V3M12.500 6V3M11 11v4.500" fill="#fff" /></svg>
                <svg class="ml-2.5 h-4 w-4" viewBox="0 0 16 16"><path d="M1 5h3l5-4v14l-5-4H1z" fill="#fff" /><path d="M11.500 6q1.500 2 0 4" fill="none" stroke="#fff" stroke-width="1.200" /></svg>
                <time class="ml-[15px] w-[60px] text-center leading-[18px] whitespace-nowrap">21:00<br>2019/1/15</time>
                <button class="ml-2 h-[38px] w-3.5 border border-[#0d2c50] bg-linear-to-br from-[#6f94b8] to-[#1d4675]" aria-label="显示桌面"></button>
            </div>
        </div>
    </footer>
</body>
</html>
